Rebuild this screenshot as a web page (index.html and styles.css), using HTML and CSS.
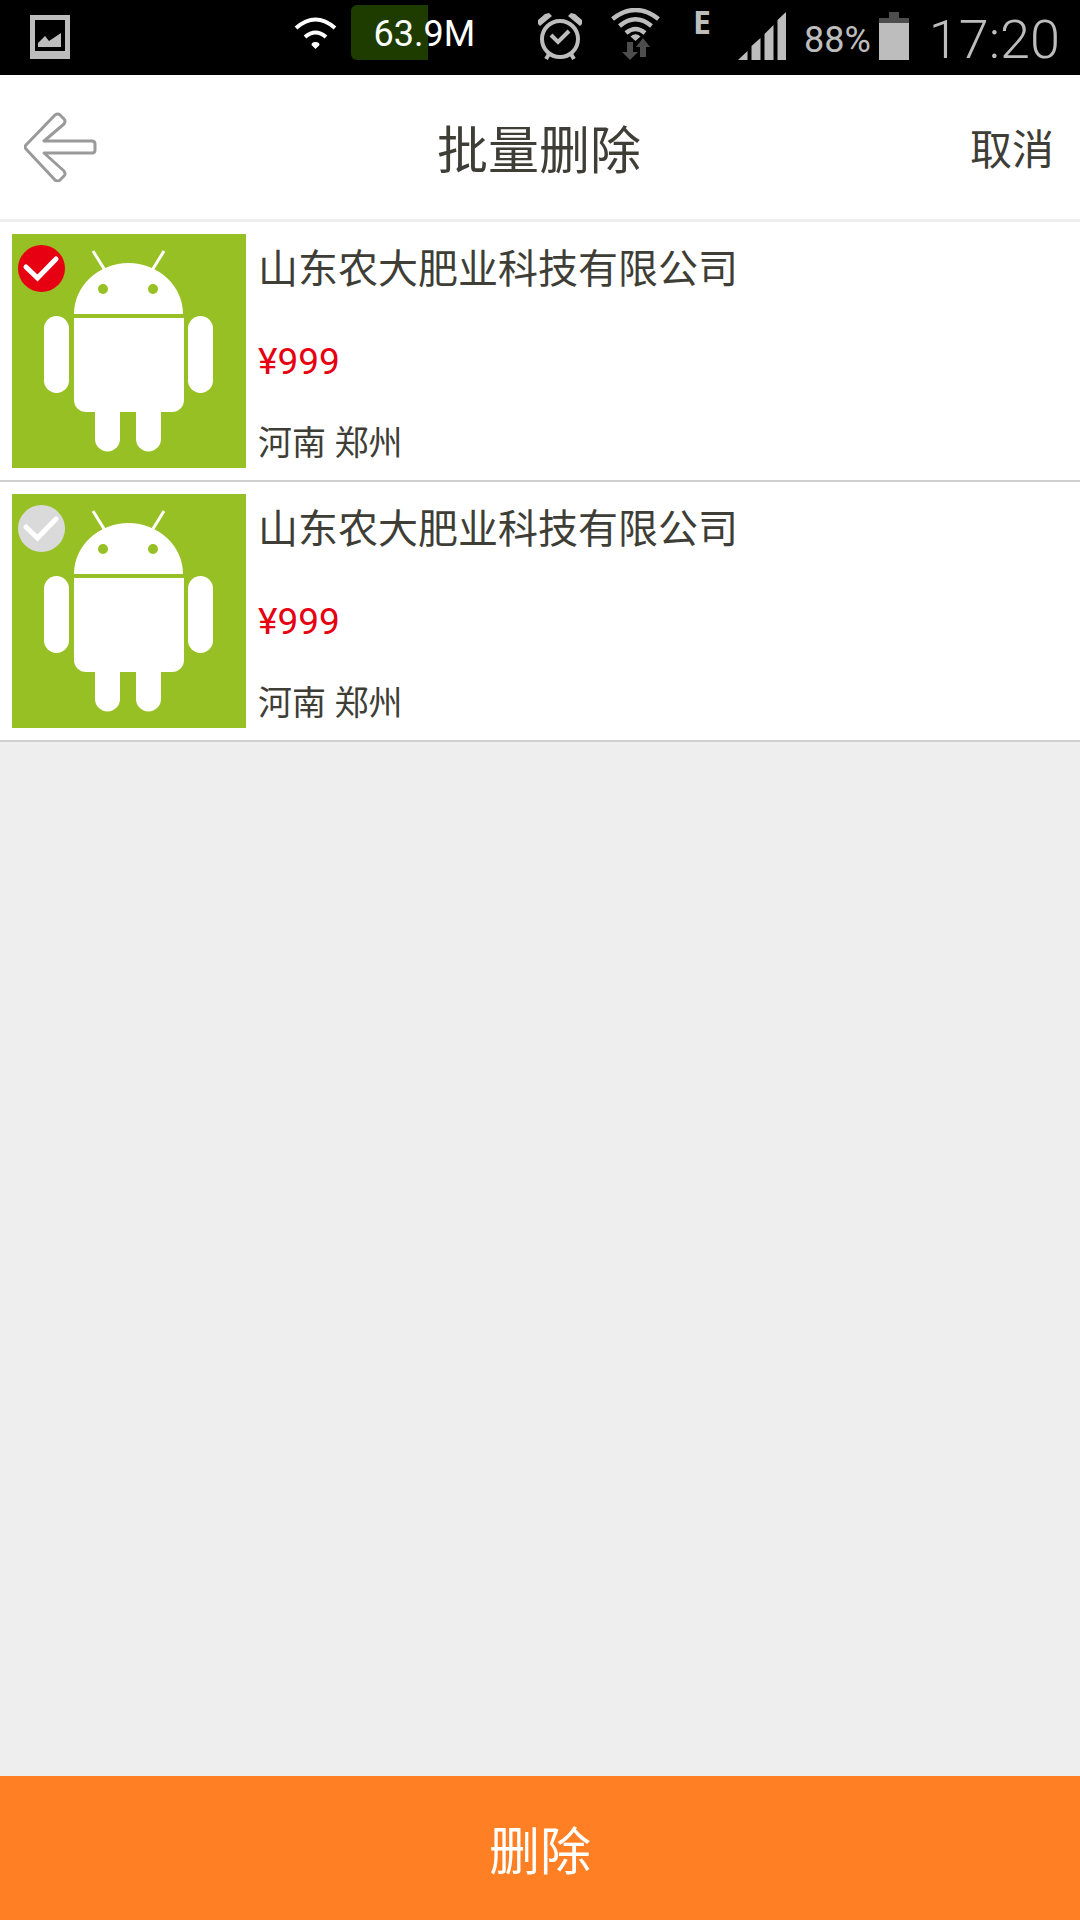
FILE: index.html
```html
<!DOCTYPE html>
<html lang="zh-CN">
<head>
<meta charset="utf-8">
<meta name="viewport" content="width=device-width, initial-scale=1">
<title>批量删除</title>
<link rel="stylesheet" href="styles.css">
</head>
<body>
<svg class="defs" aria-hidden="true">
  <symbol id="robot" viewBox="0 0 234 234">
    <g fill="#fff">
      <path d="M62 80a54.500 51 0 0 1 109 0z"/>
      <path d="M62 84h110v82a12 12 0 0 1-12 12H74a12 12 0 0 1-12-12z"/>
      <rect x="32" y="82" width="25" height="77" rx="12.500"/>
      <rect x="176" y="82" width="25" height="77" rx="12.500"/>
      <path d="M83 170h25v35a12.500 12.500 0 0 1-25 0z"/>
      <path d="M124 170h25v35a12.500 12.500 0 0 1-25 0z"/>
    </g>
    <path d="M81 17l13 21M152 17l-13 21" stroke="#fff" stroke-width="3"/>
    <g fill="#97c024"><circle cx="91" cy="55" r="5"/><circle cx="141" cy="55" r="5"/></g>
  </symbol>
  <symbol id="tick" viewBox="0 0 47 47">
    <path d="M8 22l11.500 11L38 14" fill="none" stroke="#fff" stroke-width="5" stroke-linecap="round"/>
  </symbol>
</svg>

<div class="status">
  <svg class="status-photo" width="40" height="44" viewBox="0 0 40 44" aria-hidden="true">
    <path fill="#bdbdbd" fill-rule="evenodd" d="M0 0h40v44H0zM5 5v31h30V5z"/>
    <path fill="#bdbdbd" d="M8 32v-4l7-7 4 5 12-8v14z"/>
  </svg>
  <div class="speed">
    <svg width="43" height="32" viewBox="0 0 43 32" aria-hidden="true">
      <path d="M2 11Q21.500-6 41 11M11 20q10.500-9 21 0" fill="none" stroke="#fff" stroke-width="4"/>
      <path d="M21.500 32l-4-4q0-3 4-3t4 3z" fill="#fff"/>
    </svg>
    <span class="speed-value">63.9M</span>
  </div>
  <div class="status-icons">
    <svg width="44" height="47" viewBox="0 0 44 47" aria-hidden="true">
      <g fill="none" stroke="#bdbdbd">
        <circle cx="22" cy="26" r="18" stroke-width="4"/>
        <path d="M13 22l7 7 11-11" stroke-width="4"/>
        <path d="M11 41l-3 5M33 41l3 5" stroke-width="4"/>
      </g>
      <path fill="#bdbdbd" d="M0 11V7l7-6 4-1 3 3L2 13zM44 11V7l-7-6-4-1-3 3 12 10z"/>
    </svg>
    <svg class="status-wifi" width="49" height="52" viewBox="0 0 49 52" aria-hidden="true">
      <path d="M1.500 11Q24.500-7 47.500 11M8.500 18Q24.500 4.500 40.500 18M15 25Q24.500 17 34 25" fill="none" stroke="#bdbdbd" stroke-width="4.500"/>
      <path d="M24.500 33l-5-4.500q5-4.500 10 0z" fill="#bdbdbd"/>
      <path d="M16 34h6v10h5l-8 8-8-8h5zM32 30l7 9h-4v10h-6V39h-4z" fill="#4d4d4d"/>
    </svg>
    <span class="network">E</span>
    <svg width="48" height="48" viewBox="0 0 48 48" aria-hidden="true">
      <path fill="#bdbdbd" d="M0 48l9.500-9v9zM13.500 48V34l9-8v22zM26.500 48V22l9-9v35zM39.500 48V8l8.500-8v48z"/>
    </svg>
    <span class="percent">88%</span>
    <svg width="30" height="48" viewBox="0 0 30 48" aria-hidden="true">
      <path fill="#4d4d4d" d="M10 0h10v6h10v5H0V6h10z"/>
      <path fill="#bdbdbd" d="M0 11h30v37H0z"/>
    </svg>
    <time class="clock">17:20</time>
  </div>
</div>

<header class="header">
  <button class="back" type="button" aria-label="返回">
    <svg width="74" height="70" viewBox="0 0 74 70" aria-hidden="true">
      <path d="M2 33L31 3q3-2 5 0l4 4q2 2 0 5L20 29h48q3 0 3 3v6q0 3-3 3H20l20 18q2 3 0 5l-4 4q-2 2-5 0L2 37q-2-2 0-4z" fill="none" stroke="#9a9a9a" stroke-width="3" stroke-linejoin="round"/>
    </svg>
  </button>
  <h1 class="title">批量删除</h1>
  <button class="cancel" type="button">取消</button>
</header>

<main class="main">
  <ul class="list">
    <li class="item">
      <div class="thumb">
        <svg class="thumb-art" aria-hidden="true"><use href="#robot"/></svg>
        <div class="check">
          <input class="check-box" type="checkbox" id="item-1" checked>
          <svg class="check-mark" aria-hidden="true"><use href="#tick"/></svg>
        </div>
      </div>
      <label class="details" for="item-1">
        <span class="name">山东农大肥业科技有限公司</span>
        <span class="price">¥999</span>
        <span class="place">河南 郑州</span>
      </label>
    </li>
    <li class="item">
      <div class="thumb">
        <svg class="thumb-art" aria-hidden="true"><use href="#robot"/></svg>
        <div class="check">
          <input class="check-box" type="checkbox" id="item-2">
          <svg class="check-mark" aria-hidden="true"><use href="#tick"/></svg>
        </div>
      </div>
      <label class="details" for="item-2">
        <span class="name">山东农大肥业科技有限公司</span>
        <span class="price">¥999</span>
        <span class="place">河南 郑州</span>
      </label>
    </li>
  </ul>
</main>

<button class="delete" type="button">删除</button>
</body>
</html>
```
FILE: styles.css
```css
* {
  box-sizing: border-box;
}

body {
  margin: 0;
  min-height: 100vh;
  display: flex;
  flex-direction: column;
  background: #eee;
  color: #3e3e37;
  font-family: Roboto, "Noto Sans CJK SC", sans-serif;
}

button {
  border: 0;
  padding: 0;
  background: none;
  color: inherit;
  font-family: inherit;
  cursor: pointer;
}

svg {
  display: block;
  flex: none;
}

.defs {
  position: absolute;
  width: 0;
  height: 0;
}

/* Status bar */

.status {
  display: flex;
  align-items: flex-start;
  height: 75px;
  padding: 0 20px 0 30px;
  background: #000;
  color: #bdbdbd;
}

.status-photo {
  margin-top: 15px;
}

.speed {
  display: flex;
  align-items: center;
  gap: 14px;
  margin: 5px 63px 0 auto;
  color: #fff;
}

.speed-value {
  padding: 4px 0 0 22px;
  border-radius: 6px 0 0 6px;
  background: linear-gradient(#1e3c00, #1e3c00) left / 77px 100% no-repeat;
  font-size: 36px;
  line-height: 51px;
}

.status-icons {
  display: flex;
  align-items: flex-end;
  height: 60px;
}

.status-wifi {
  margin-left: 29px;
}

.network {
  align-self: flex-start;
  margin: 6px 27px 0 33px;
  font: bold 32px/32px "Noto Sans", sans-serif;
}

.percent {
  margin: 0 8px 0 18px;
  font-size: 36px;
  line-height: 40px;
}

.clock {
  margin-left: 20px;
  font-size: 54px;
  font-weight: 300;
  line-height: 40px;
}

/* Title bar */

.header {
  display: grid;
  grid-template-columns: 1fr auto 1fr;
  align-items: center;
  height: 147px;
  padding: 0 26px 0 24px;
  border-bottom: 3px solid #eee;
  background: #fff;
}

.back {
  justify-self: start;
}

.title {
  margin: 0;
  padding-top: 10px;
  font-size: 51px;
  font-weight: 400;
  line-height: 60px;
}

.cancel {
  justify-self: end;
  padding-top: 8px;
  font-size: 42px;
  line-height: 60px;
}

/* Item list */

.main {
  flex: 1;
}

.list {
  margin: 0;
  padding: 0;
  list-style: none;
}

.item {
  display: flex;
  gap: 12px;
  padding: 12px;
  border-bottom: 2px solid #d0d0d0;
  background: #fff;
}

.thumb {
  position: relative;
  flex: none;
  background: #97c024;
}

.thumb-art {
  width: 234px;
  height: 234px;
}

.check {
  position: absolute;
  top: 11px;
  left: 6px;
  display: grid;
}

.check-box,
.check-mark {
  grid-area: 1 / 1;
  width: 47px;
  height: 47px;
}

.check-box {
  appearance: none;
  margin: 0;
  border-radius: 50%;
  background: #dadada;
}

.check-box:checked {
  background: #e60012;
}

.check-mark {
  pointer-events: none;
}

.details {
  display: flex;
  flex: 1;
  flex-direction: column;
  justify-content: space-between;
}

.name {
  font-size: 40px;
  line-height: 72px;
}

.price {
  color: #e60012;
  font-size: 37px;
  line-height: 40px;
}

.place {
  font-size: 34px;
  line-height: 50px;
}

/* Bottom action */

.delete {
  height: 144px;
  background: #ff8024;
  color: #fff;
  font-size: 51px;
}
```
